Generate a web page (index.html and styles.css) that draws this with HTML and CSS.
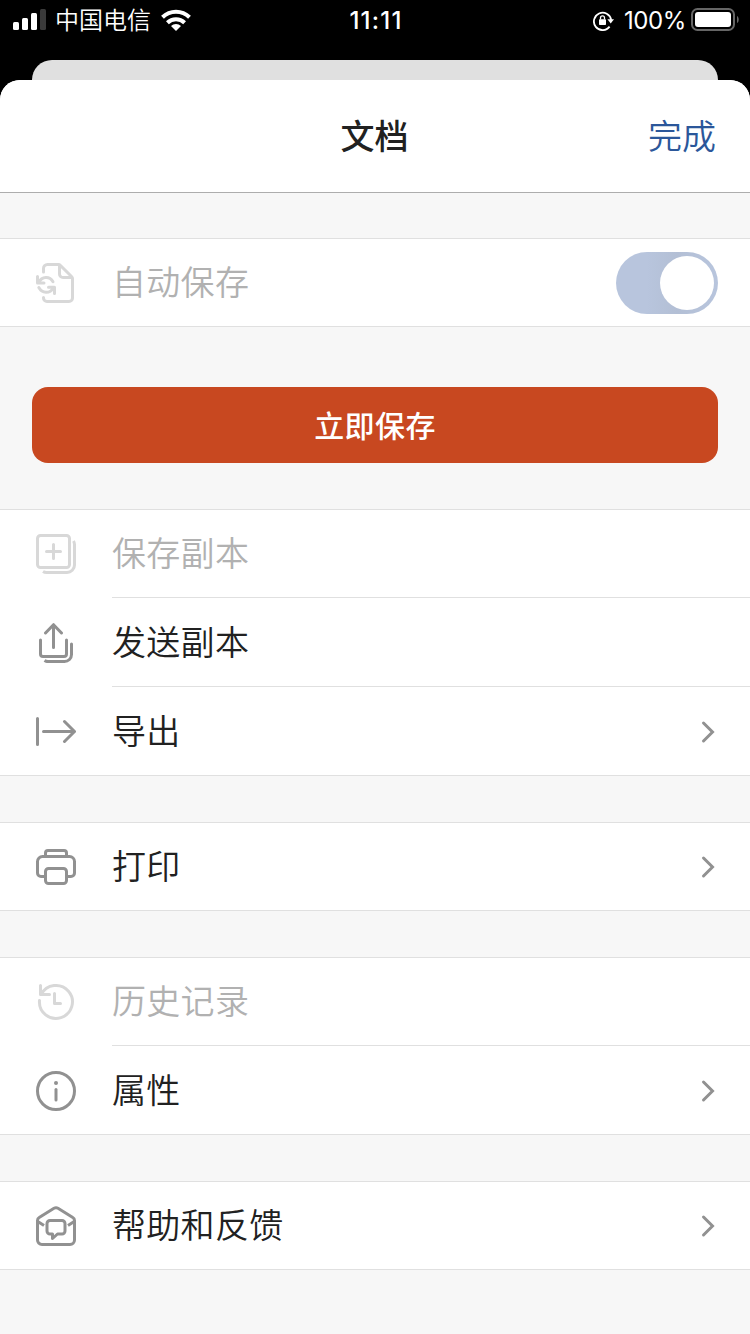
FILE: index.html
```html
<!DOCTYPE html>
<html lang="zh-CN">
<head>
<meta charset="utf-8">
<title>文档</title>
<link rel="stylesheet" href="styles.css">
</head>
<body>
<div class="screen">
  <div class="status">
    <div class="status-left">
      <svg class="signal" width="33" height="21" viewBox="0 0 33 21"><rect x="0" y="13" width="6" height="8" rx="1.5" fill="#fff"/><rect x="9" y="9" width="6" height="12" rx="1.5" fill="#fff"/><rect x="18" y="4" width="6" height="17" rx="1.5" fill="#fff"/><rect x="27" y="0" width="6" height="21" rx="1.5" fill="#3a3a3a"/></svg>
      <span class="carrier">中国电信</span>
      <svg class="wifi" width="30" height="23" viewBox="0 0 30 23"><g fill="none" stroke="#fff" stroke-width="4"><path d="M1.5 8.2a19.4 19.4 0 0 1 27 0"/><path d="M6.4 13.7a12.3 12.3 0 0 1 17.2 0"/></g><path d="M15 22l-5-5.1a7.2 7.2 0 0 1 10 0z" fill="#fff"/></svg>
    </div>
    <span class="time">11:11</span>
    <div class="status-right">
      <svg class="lock" width="22" height="20" viewBox="0 0 22 20"><path d="M16.600 15.600A8.700 8.700 0 1 1 18.200 9" fill="none" stroke="#fff" stroke-width="1.8"/><path d="M14.400 8.200H21L17.700 12.500z" fill="#fff"/><rect x="6" y="8.200" width="7" height="5.800" rx=".8" fill="#fff"/><path d="M7.500 8.500V6.800a2 2 0 0 1 4 0v1.700" fill="none" stroke="#fff" stroke-width="1.3"/></svg>
      <span class="percent">100%</span>
      <svg class="battery" width="48" height="23" viewBox="0 0 48 23"><rect x="1" y="1" width="42" height="21" rx="5.5" fill="none" stroke="#666" stroke-width="2"/><rect x="4" y="4" width="36" height="15" rx="3" fill="#fff"/><path d="M46 8c2.3 1 2.3 6 0 7z" fill="#666"/></svg>
    </div>
  </div>
  <div class="back-card"></div>
  <main class="sheet">
    <header class="header">
      <h1 class="title">文档</h1>
      <a class="done">完成</a>
    </header>
    <section class="group first">
      <div class="row disabled">
        <svg class="icon" viewBox="0 0 40 40"><path d="M7.500 9V5.500a4 4 0 0 1 4-4H22.500q1 0 2 1L35.500 13.500q1 1 1 2V35a3.500 3.500 0 0 1-3.500 3.500H11a3.500 3.500 0 0 1-3.500-3.500v-.5M23.500 2.500V11a3.500 3.500 0 0 0 3.500 3.500h9M1.500 13.500V20H8M2.500 19.500C6 13.300 13.500 12.800 17 18.800M18.500 30.500V24.300H12.500M2.800 24.500C6.200 30.500 13.500 31.200 17.500 25"/></svg>
        <span class="label">自动保存</span>
        <span class="switch"><span class="knob"></span></span>
      </div>
    </section>
    <button class="save">立即保存</button>
    <section class="group">
      <div class="row disabled">
        <svg class="icon" viewBox="0 0 40 40"><rect x="1.500" y="1.500" width="32" height="32" rx="3"/><path d="M17.500 10.500v14M10.500 17.500h14"/><path class="butt" d="M7 37.500q1.500 1 3.500 1H31a7.500 7.500 0 0 0 7.500-7.500V10.500q0-2-1-3.500"/></svg>
        <span class="label">保存副本</span>
      </div>
      <div class="row tall">
        <svg class="icon" viewBox="0 0 40 40"><path d="M17.500 24.500V1.800M9.500 10l8-8.300 8 8.300M4.500 17v14a2.500 2.500 0 0 0 2.500 2.500h21a2.500 2.500 0 0 0 2.500-2.500V17M35.500 21v10.500a7 7 0 0 1-7 7H11.500"/><path class="butt" d="M8.500 37.500q1.500 1 3.500 1"/></svg>
        <span class="label">发送副本</span>
      </div>
      <div class="row tall">
        <svg class="icon" viewBox="0 0 40 40"><path d="M1.500 6.500v26M7.500 19.500h31M28.500 9.500l10 10-10 10"/></svg>
        <span class="label">导出</span>
        <svg class="chevron" viewBox="0 0 14 24"><path d="M2.500 3l9 9-9 9"/></svg>
      </div>
    </section>
    <section class="group">
      <div class="row">
        <svg class="icon" viewBox="0 0 40 40"><path d="M9.500 9V6a2.500 2.500 0 0 1 2.500-2.500h16A2.500 2.500 0 0 1 30.500 6v3M9.500 29.500H5A3.500 3.500 0 0 1 1.500 26V14.500a5 5 0 0 1 5-5h27a5 5 0 0 1 5 5V26a3.500 3.500 0 0 1-3.500 3.500h-4.500"/><rect x="9.500" y="21.500" width="21" height="15" rx="3"/></svg>
        <span class="label">打印</span>
        <svg class="chevron" viewBox="0 0 14 24"><path d="M2.500 3l9 9-9 9"/></svg>
      </div>
    </section>
    <section class="group">
      <div class="row disabled">
        <svg class="icon" viewBox="0 0 40 40"><path d="M4.500 3.500v9h9M5.200 12.500A16.500 16.500 0 1 1 3.500 18.500M18.500 11.500v10h6"/></svg>
        <span class="label">历史记录</span>
      </div>
      <div class="row tall">
        <svg class="icon" viewBox="0 0 40 40"><circle cx="20" cy="20" r="18.500"/><path d="M20 18.500v10.500"/><circle class="dot" cx="20" cy="12" r="2"/></svg>
        <span class="label">属性</span>
        <svg class="chevron" viewBox="0 0 14 24"><path d="M2.500 3l9 9-9 9"/></svg>
      </div>
    </section>
    <section class="group">
      <div class="row">
        <svg class="icon" viewBox="0 0 40 40"><path d="M1.500 14.500q0-2 1.700-3L18 2.300q2-1.200 4 0l14.800 9.200q1.700 1 1.700 3V34a4.500 4.500 0 0 1-4.500 4.500H6A4.500 4.500 0 0 1 1.500 34z"/><path class="butt" d="M1.800 15.500L8 19.500M38.200 15.500L32 19.500"/><path d="M14 14.500h12a3 3 0 0 1 3 3V25a3 3 0 0 1-3 3h-4.500l-5 4.500V28H14a3 3 0 0 1-3-3v-7.500a3 3 0 0 1 3-3z"/></svg>
        <span class="label">帮助和反馈</span>
        <svg class="chevron" viewBox="0 0 14 24"><path d="M2.500 3l9 9-9 9"/></svg>
      </div>
    </section>
  </main>
</div>
</body>
</html>
```
FILE: styles.css
```css
* { box-sizing: border-box; }
body {
  margin: 0;
  background: #000;
  font-family: "Inter", "Noto Sans CJK SC", sans-serif;
  color: #212121;
}
.screen {
  width: 750px;
  height: 1334px;
  overflow: hidden;
  display: flex;
  flex-direction: column;
}
.status {
  height: 60px;
  flex: none;
  display: grid;
  grid-template-columns: 1fr auto 1fr;
  color: #fff;
  padding: 0 11px 0 13px;
  line-height: 42px;
  font-size: 24px;
}
.status-left, .status-right { display: flex; height: 42px; }
.status-right { justify-content: flex-end; }
.signal { margin-top: 9px; }
.carrier { margin-left: 9px; font-weight: 350; }
.wifi { margin: 9px 0 0 10px; }
.time { font-weight: 500; font-size: 24px; letter-spacing: 1.2px; }
.lock { margin: 11px 9px 0 0; }
.percent { font-size: 24px; letter-spacing: -.4px; }
.battery { margin: 8px 0 0 5px; }
.back-card {
  height: 20px;
  flex: none;
  margin: 0 32px;
  background: #e0e0e0;
  border-radius: 20px 20px 0 0;
}
.sheet {
  flex: 1;
  background: #f7f7f7;
  border-radius: 20px 20px 0 0;
  overflow: hidden;
}
.header {
  height: 113px;
  background: #fff;
  border-bottom: 1px solid #adadad;
  display: grid;
  grid-template-columns: 1fr auto 1fr;
  padding: 0 34px;
  line-height: 114px;
}
.title {
  grid-column: 2;
  margin: 0 1px 0 0;
  font-size: 34px;
  font-weight: 500;
}
.done { justify-self: end; font-size: 34px; font-weight: 350; color: #2b579a; }
.group {
  background: #fff;
  border-top: 1px solid #e0e0e0;
  border-bottom: 1px solid #e0e0e0;
  margin-top: 46px;
}
.first { margin-top: 45px; }
.row {
  height: 87px;
  padding: 0 32px 0 36px;
  display: flex;
  align-items: flex-start;
}
.row.tall {
  height: 89px;
  background: linear-gradient(#e0e0e0, #e0e0e0) 112px 0 / 100% 1px no-repeat;
}
.icon {
  width: 40px;
  height: 40px;
  margin: 24px 36px 0 0;
  flex: none;
  fill: none;
  stroke: #919191;
  stroke-width: 3;
  stroke-linecap: round;
  stroke-linejoin: round;
}
.tall .icon { margin-top: 26px; }
.icon .butt { stroke-linecap: butt; }
.icon .dot { fill: #919191; stroke: none; }
.label {
  flex: 1;
  font-size: 34px;
  font-weight: 350;
  line-height: 87px;
  letter-spacing: .3px;
}
.tall .label { line-height: 91px; }
.disabled .icon { stroke: #d8d8d8; }
.disabled .label { color: #b1b1b1; }
.chevron {
  width: 14px;
  height: 24px;
  margin: 32px 3px 0 0;
  fill: none;
  stroke: #919191;
  stroke-width: 3;
  stroke-linecap: round;
}
.tall .chevron { margin-top: 34px; }
.switch {
  width: 102px;
  height: 62px;
  margin-top: 13px;
  border-radius: 31px;
  padding: 4px;
  display: flex;
  justify-content: flex-end;
  background: linear-gradient(90deg, #b8c5dd 30%, #b3bfd5 60%, #b8c5dd);
}
.knob { width: 54px; height: 54px; border-radius: 50%; background: #fff; }
.save {
  display: block;
  width: 686px;
  height: 76px;
  margin: 60px auto 0;
  border: 0;
  border-radius: 16px;
  background: #c84820;
  color: #fff;
  font: 500 30px/74px "Noto Sans CJK SC", sans-serif;
  letter-spacing: .4px;
  padding: 0 0 2px;
}
```
